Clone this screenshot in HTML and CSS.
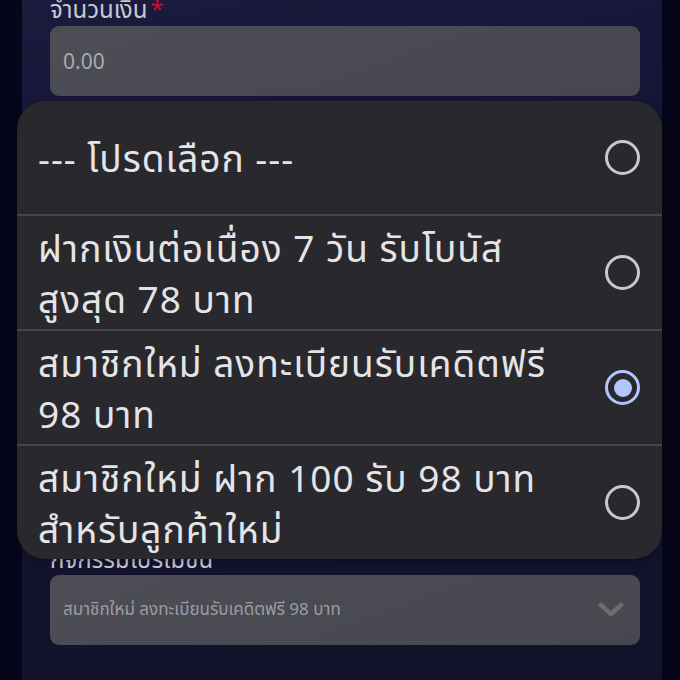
FILE: index.html
```html
<!DOCTYPE html>
<html lang="th">
<head>
<meta charset="utf-8">
<link rel="stylesheet" href="styles.css">
</head>
<body>
<div class="page">
  <div class="panel">
    <div class="field">
      <div class="label label-top">จำนวนเงิน<span class="req">*</span></div>
      <div class="input"><span class="placeholder">0.00</span></div>
    </div>
    <div class="field field-promo">
      <div class="label">กิจกรรมโปรโมชั่น</div>
      <div class="input select">
        <span class="select-text">สมาชิกใหม่ ลงทะเบียนรับเคดิตฟรี 98 บาท</span>
        <svg class="chev" width="26" height="16" viewBox="0 0 26 16"><path d="M3 3 L13 12 L23 3" fill="none" stroke="#6c6c73" stroke-width="4.5" stroke-linecap="round" stroke-linejoin="round"/></svg>
      </div>
    </div>
  </div>
  <div class="popup">
    <div class="opt">
      <span class="opt-text">--- โปรดเลือก ---</span>
      <span class="radio"></span>
    </div>
    <div class="opt">
      <span class="opt-text">ฝากเงินต่อเนื่อง 7 วัน รับโบนัส<br>สูงสุด 78 บาท</span>
      <span class="radio"></span>
    </div>
    <div class="opt">
      <span class="opt-text">สมาชิกใหม่ ลงทะเบียนรับเคดิตฟรี<br>98 บาท</span>
      <span class="radio on"></span>
    </div>
    <div class="opt">
      <span class="opt-text">สมาชิกใหม่ ฝาก 100 รับ 98 บาท<br>สำหรับลูกค้าใหม่</span>
      <span class="radio"></span>
    </div>
  </div>
</div>
</body>
</html>
```

FILE: styles.css
```css
html, body {
  margin: 0;
  padding: 0;
  background: #06061a;
  font-family: "Noto Sans", "Noto Sans Thai", sans-serif;
}
.page {
  position: relative;
  width: 680px;
  height: 680px;
  overflow: hidden;
}
.panel {
  margin: 0 18px 0 22px;
  height: 680px;
  padding: 0 22px 0 28px;
  box-sizing: border-box;
  background: linear-gradient(170deg, #1b1b3e 0%, #16163a 20%, #131330 55%, #12122a 100%);
  display: flex;
  flex-direction: column;
}
.label {
  font-size: 24px;
  line-height: 26px;
  color: #c9c9d2;
  height: 26px;
  white-space: nowrap;
}
.label-top {
  margin-top: -4px;
}
.req {
  color: #c8102e;
  margin-left: 3px;
}
.field {
  display: flex;
  flex-direction: column;
  gap: 3px;
}
.field:first-child {
  gap: 4px;
}
.input {
  height: 70px;
  border-radius: 9px;
  background: linear-gradient(160deg, #4d4d55, #47474f);
  display: flex;
  align-items: center;
  padding: 0 13px;
  box-sizing: border-box;
}
.placeholder {
  font-size: 21px;
  color: #a9a9b0;
}
.field-promo {
  margin-top: 450px;
}
.select {
  justify-content: space-between;
  padding-right: 16px;
}
.select-text {
  font-size: 17px;
  color: #9c9ca3;
}
.chev {
  display: block;
}
.popup {
  position: absolute;
  left: 17px;
  top: 101px;
  width: 645px;
  height: 458px;
  border-radius: 28px;
  background: #28282d;
  overflow: hidden;
  display: flex;
  flex-direction: column;
  box-shadow: 0 2px 10px rgba(0,0,0,0.3);
}
.opt {
  flex: 1;
  display: flex;
  align-items: center;
  justify-content: space-between;
  padding: 0 22px 0 21px;
  border-top: 2px solid #46464c;
}
.opt:first-child {
  border-top: none;
}
.opt-text {
  font-size: 37px;
  line-height: 51px;
  letter-spacing: 1px;
  color: #e4e4e8;
}
.radio {
  width: 35px;
  height: 35px;
  box-sizing: border-box;
  border: 3.5px solid #c9c9cc;
  border-radius: 50%;
  flex: none;
  display: flex;
  align-items: center;
  justify-content: center;
}
.radio.on {
  border-color: #b2c5ff;
}
.radio.on::after {
  content: "";
  width: 18px;
  height: 18px;
  border-radius: 50%;
  background: #b2c5ff;
}
```
